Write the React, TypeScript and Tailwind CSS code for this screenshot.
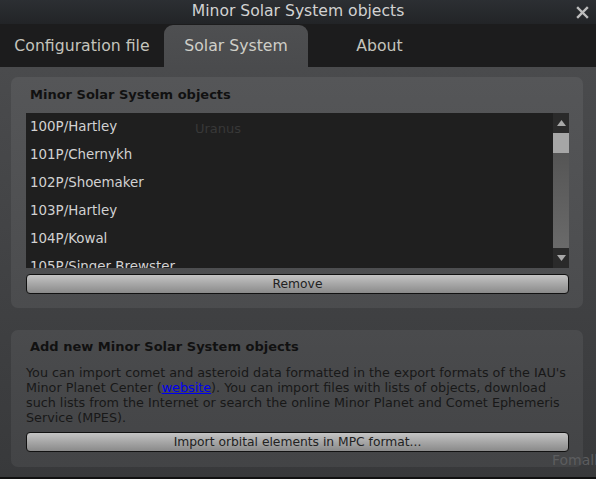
import React from 'react';

const objects = [
  '100P/Hartley',
  '101P/Chernykh',
  '102P/Shoemaker',
  '103P/Hartley',
  '104P/Kowal',
  '105P/Singer Brewster',
];

const tabs = [
  { label: 'Configuration file', w: 'w-[164px]', active: false },
  { label: 'Solar System', w: 'w-[144px]', active: true },
  { label: 'About', w: 'w-[143px]', active: false },
];

function QtButton({ children }: { children: React.ReactNode }) {
  return (
    <button className="block h-[20px] w-full rounded-[4px] border border-[#111] bg-gradient-to-b from-[#c4c4c4] to-[#8a8a8a] text-[12.3px] leading-[18px] text-[#222]">
      {children}
    </button>
  );
}

function ScrollBar() {
  return (
    <div className="flex w-[16px] flex-col bg-[#5a5a5a]">
      <div className="flex h-[20px] items-center justify-center bg-[#2a2a2a]">
        <svg width="9" height="6" viewBox="0 0 9 6">
          <polygon points="4.5,0 9,6 0,6" fill="#a8a8a8" />
        </svg>
      </div>
      <div className="h-[20px] bg-[#a6a6a6]" />
      <div className="flex-1 bg-gradient-to-b from-[#555] to-[#6a6a6a]" />
      <div className="flex h-[20px] items-center justify-center bg-[#2a2a2a]">
        <svg width="9" height="6" viewBox="0 0 9 6">
          <polygon points="0,0 9,0 4.5,6" fill="#a8a8a8" />
        </svg>
      </div>
    </div>
  );
}

export default function App() {
  return (
    <div
      className="relative flex h-[479px] w-[596px] flex-col overflow-hidden bg-[#111]"
      style={{ fontFamily: '"DejaVu Sans", sans-serif' }}
    >
      {/* title bar */}
      <div className="relative flex h-[24px] items-center justify-center bg-gradient-to-b from-[#2c2f33] to-[#222427]">
        <span className="text-[15.6px] leading-none text-[#d2d2d2]">Minor Solar System objects</span>
        <svg className="absolute right-[7px] top-[6px]" width="13" height="13" viewBox="0 0 13 13">
          <path d="M2 2 L11 11 M11 2 L2 11" stroke="#bdbdbd" strokeWidth="2.4" strokeLinecap="square" />
        </svg>
      </div>

      {/* tabs */}
      <div className="flex h-[43px] items-end bg-[#1c1c1d]">
        {tabs.map((t) =>
          t.active ? (
            <div
              key={t.label}
              className={`${t.w} flex h-[42px] items-center justify-center rounded-t-[9px] bg-gradient-to-b from-[#4e4f51] to-[#4a4b4d] text-[15.7px] text-[#cfcfc8]`}
            >
              {t.label}
            </div>
          ) : (
            <div
              key={t.label}
              className={`${t.w} flex h-[42px] items-center justify-center text-[15.7px] text-[#c4c4bc]`}
            >
              {t.label}
            </div>
          )
        )}
      </div>

      {/* content */}
      <div className="relative flex h-[410px] flex-col bg-gradient-to-b from-[#4a4b4d] to-[#38393b] pl-[11px] pr-[13px] pt-[10px]">
        {/* group 1 */}
        <div className="flex flex-col rounded-[7px] bg-gradient-to-b from-[#555658] to-[#4b4c4e] pb-[14px] pl-[15px] pr-[14px] pt-[10px]">
          <div className="h-[16px] pl-[4px] text-[13px] font-bold leading-[16px] text-[#111]">
            Minor Solar System objects
          </div>
          <div className="relative mt-[10px] flex h-[155px] bg-[#1f1f1f]">
            <div className="flex-1 overflow-hidden pl-[4px]">
              {objects.map((o) => (
                <div key={o} className="h-[28px] text-[13.4px] leading-[28px] text-[#d2d2d2]">
                  {o}
                </div>
              ))}
            </div>
            <span className="absolute left-[169px] top-[6px] text-[13px] text-[#383838]">Uranus</span>
            <ScrollBar />
          </div>
          <div className="mt-[6px]">
            <QtButton>Remove</QtButton>
          </div>
        </div>

        {/* group 2 */}
        <div className="mt-[22px] flex flex-col rounded-[7px] bg-gradient-to-b from-[#4a4b4d] to-[#434446] pb-[15px] pl-[15px] pr-[14px] pt-[9px]">
          <div className="h-[16px] pl-[4px] text-[13px] font-bold leading-[16px] text-[#111]">
            Add new Minor Solar System objects
          </div>
          <p className="mt-[10px] text-[12.75px] leading-[15px] text-[#181818]">
            You can import comet and asteroid data formatted in the export formats of the IAU's Minor Planet Center (
            <span className="text-[#0000ee] underline">website</span>). You can import files with lists of objects, download
            such lists from the Internet or search the online Minor Planet and Comet Ephemeris Service (MPES).
          </p>
          <div className="mt-[7px]">
            <QtButton>Import orbital elements in MPC format...</QtButton>
          </div>
        </div>

        <span className="absolute left-[552px] top-[383px] text-[14px] text-[#5c5d5f]">Fomalh</span>
      </div>
    </div>
  );
}
